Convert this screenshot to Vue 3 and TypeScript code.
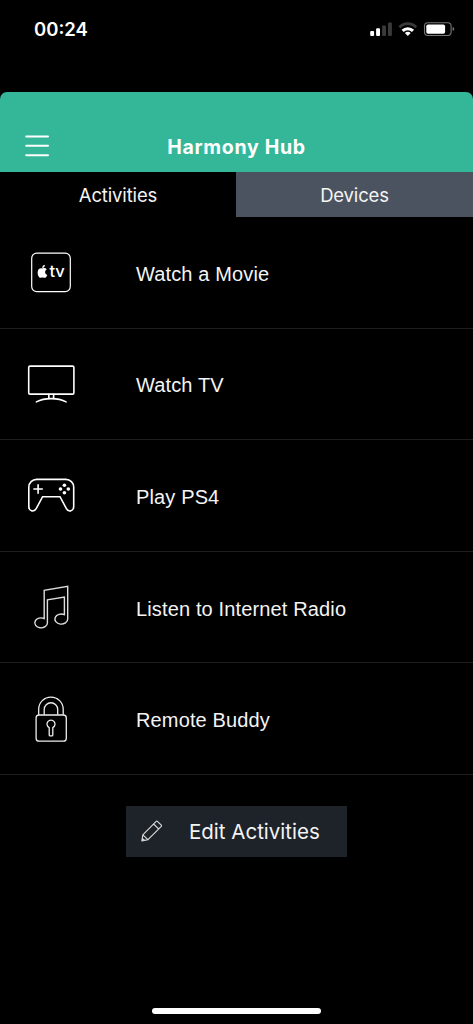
<script setup lang="ts">
import { ref } from 'vue'

type IconName = 'appletv' | 'tv' | 'gamepad' | 'music' | 'lock'

interface Activity {
  label: string
  icon: IconName
}

const activities: Activity[] = [
  { label: 'Watch a Movie', icon: 'appletv' },
  { label: 'Watch TV', icon: 'tv' },
  { label: 'Play PS4', icon: 'gamepad' },
  { label: 'Listen to Internet Radio', icon: 'music' },
  { label: 'Remote Buddy', icon: 'lock' },
]

const tabs = ['Activities', 'Devices'] as const
const activeTab = ref<(typeof tabs)[number]>('Activities')
</script>

<template>
  <div class="screen">
    <div class="status">
      <span class="time">00:24</span>
      <svg class="indicators" width="86" height="16" viewBox="369 21 86 16">
        <g fill="#fff">
          <rect x="370.2" y="31" width="3.9" height="5" rx="1" />
          <rect x="376.1" y="28.2" width="3.9" height="7.8" rx="1" />
          <rect x="382.1" y="25.4" width="3.9" height="10.6" rx="1" fill="#3a3a3a" />
          <rect x="388" y="22.5" width="3.9" height="13.5" rx="1" fill="#3a3a3a" />
        </g>
        <g fill="none" stroke-width="2.7">
          <path d="M399.4 27.3 A11.6 11.6 0 0 1 416.2 27.3" stroke="#3a3a3a" />
          <path d="M402.6 30.9 A7.2 7.2 0 0 1 413 30.9" stroke="#fff" stroke-width="3" />
        </g>
        <path d="M404.9 33 A4 4 0 0 1 410.7 33 L407.8 35.9 Z" fill="#fff" />
        <rect x="424.5" y="22.7" width="26.6" height="12.8" rx="3.4" fill="none" stroke="#777" stroke-width="1.1" />
        <rect x="426.3" y="24.5" width="18.8" height="9.2" rx="1.8" fill="#fff" />
        <path d="M452.6 27.1 Q454.3 27.5 454.3 29.1 Q454.3 30.7 452.6 31.1 Z" fill="#777" />
      </svg>
    </div>

    <header class="header">
      <button class="menu" aria-label="Menu">
        <svg width="24" height="22" viewBox="0 0 24 22" stroke="#fff" stroke-width="2" stroke-linecap="round">
          <path d="M1.2 1.4H23M1.2 10.8H23M1.2 20.2H23" />
        </svg>
      </button>
      <h1 class="title">Harmony Hub</h1>
    </header>

    <nav class="tabs">
      <button
        v-for="tab in tabs"
        :key="tab"
        class="tab"
        :class="{ active: tab === activeTab }"
        @click="activeTab = tab"
      >{{ tab }}</button>
    </nav>

    <ul class="list">
      <li v-for="item in activities" :key="item.label" class="row">
        <svg class="icon" width="60" height="60" viewBox="-30 -30 60 60">
          <g v-if="item.icon === 'appletv'">
            <rect x="-19.3" y="-18.8" width="38.6" height="38.4" rx="5" stroke-width="1.2" />
            <path class="solid" transform="translate(0 .6)" d="M-8.7 -4.1C-7.3 -4.9 -5.3 -4.7 -4.3 -3.2C-6.6 -1.7 -6.3 1.2 -3.7 2.3C-4.6 4.5 -5.7 5.5 -7 5.2C-8.2 4.7 -8.9 4.7 -10 5.2C-12.1 5.8 -13.7 1.8 -13.3 -0.8C-12.9 -3.9 -10.7 -4.9 -8.7 -4.1ZM-8.8 -4.7C-8.8 -6.3 -7.8 -7.6 -6.1 -7.9C-5.9 -6.2 -7.1 -4.8 -8.8 -4.7Z" />
            <text class="solid brand" x="-1.6" y="5.3">tv</text>
          </g>
          <g v-else-if="item.icon === 'tv'" stroke-width="1.6">
            <rect x="-22.3" y="-17.9" width="45.2" height="28" rx="1.4" />
            <path d="M-2.2 10.2V14.6M2.6 10.2V14.6M-14.6 17.9C-6.5 13.5 7 13.5 15.1 17.9" stroke-linecap="round" />
          </g>
          <g v-else-if="item.icon === 'gamepad'" stroke-width="1.6">
            <path d="M-22.2 -7.8A7.8 7.8 0 0 1 -14.4 -15.6H14.9A7.8 7.8 0 0 1 22.7 -7.8V11.4C22.7 16.9 17 17 15.4 13.7L9 1.7H-8.4L-14.8 13.7C-16.5 17 -22.2 16.9 -22.2 11.4Z" />
            <path d="M-17.1 -6H-8.7M-12.9 -10.2V-1.8" stroke-linecap="round" />
            <g class="solid">
              <circle cx="13.4" cy="-9.8" r="1.8" />
              <circle cx="13.4" cy="-2.2" r="1.8" />
              <circle cx="9.5" cy="-6" r="1.8" />
              <circle cx="17.3" cy="-6" r="1.8" />
            </g>
          </g>
          <g v-else-if="item.icon === 'music'" stroke="#ddd" stroke-width="1.4">
            <path d="M-3.6 15.9A6.3 5 0 1 1 -6.8 11.5V-16.6L16.7 -20.7V12A6.4 5.1 0 1 1 13.4 7.6V-9.9L-3.6 -7.2Z" />
          </g>
          <g v-else stroke="#eee" stroke-width="1.3">
            <rect x="-14.9" y="-4" width="30.2" height="26.2" rx="3" />
            <path d="M-12.3 -4.2V-9.7A12.2 12.2 0 0 1 12.2 -9.7V-4.2M-6.8 -4.2V-9.5A6.7 6.7 0 0 1 6.7 -9.5V-4.2" />
            <path d="M-1.8 8.7A4 4 0 1 1 1.8 8.7V16Q1.8 16.9 0.9 16.9H-0.9Q-1.8 16.9 -1.8 16Z" />
          </g>
        </svg>
        <span class="label">{{ item.label }}</span>
      </li>
    </ul>

    <button class="edit">
      <svg width="22" height="22" viewBox="0 0 22 22" fill="none" stroke="#ddd" stroke-width="1.1" stroke-linejoin="round">
        <path d="M.8 21L1.8 14.8L15.2 1.4Q15.8 .8 16.4 1.4L20.3 5.2Q20.8 5.8 20.3 6.4L7 19.6ZM1.8 14.8L7 19.6M12.6 4L17.6 8.9M1.3 18.5L3.4 20.4" />
      </svg>
      <span>Edit Activities</span>
    </button>

    <div class="home"></div>
  </div>
</template>

<style>
html,
body {
  background: #000;
}
</style>

<style scoped>
.screen {
  box-sizing: border-box;
  display: flex;
  flex-direction: column;
  width: 473px;
  height: 1024px;
  overflow: hidden;
  background: #000;
  color: #fff;
  font-family: Inter, 'Liberation Sans', sans-serif;
}

button {
  margin: 0;
  padding: 0;
  border: 0;
  background: none;
  color: inherit;
  font: inherit;
}

.status {
  display: flex;
  justify-content: space-between;
  align-items: flex-start;
  height: 92px;
  padding: 0 18px 0 34px;
  box-sizing: border-box;
}

.time {
  margin-top: 17px;
  font-size: 18.5px;
  line-height: 24px;
  font-weight: 600;
}

.indicators {
  margin-top: 21px;
}

.header {
  display: grid;
  grid-template-columns: 74px 1fr 74px;
  align-items: start;
  height: 80px;
  padding-top: 42px;
  box-sizing: border-box;
  border-radius: 7px 7px 0 0;
  background: #33b798;
}

.menu {
  display: flex;
  padding: 1px 0 0 25px;
}

.title {
  margin: 0;
  padding-top: 1px;
  text-align: center;
  font-size: 19.5px;
  line-height: 24px;
  font-weight: 700;
  letter-spacing: 0.7px;
}

.tabs {
  display: grid;
  grid-template-columns: 236px 1fr;
  height: 45px;
}

.tab {
  background: #4a535f;
  color: #f4f4f4;
  font-size: 18.5px;
  line-height: 45px;
  letter-spacing: -0.15px;
  padding-top: 1px;
  height: 45px;
}

.tab.active {
  background: #000;
}

.list {
  margin: 0;
  padding: 0;
  list-style: none;
}

.row {
  display: flex;
  align-items: center;
  height: 111.6px;
  padding-left: 21px;
  box-sizing: border-box;
  border-bottom: 1px solid #1e1e1e;
}

.icon {
  fill: none;
  stroke: #fff;
  margin-right: 55px;
}

.solid {
  fill: #fff;
  stroke: none;
}

.brand {
  font-family: Inter, sans-serif;
  font-size: 16.5px;
  font-weight: 500;
}

.label {
  color: #f4f4f4;
  font-family: 'Liberation Sans', Arial, sans-serif;
  font-size: 20px;
  letter-spacing: 0.14px;
  line-height: 24px;
  padding-top: 3px;
}

.edit {
  display: flex;
  align-items: center;
  align-self: center;
  gap: 26px;
  width: 221px;
  height: 51px;
  margin-top: 31px;
  padding-left: 15px;
  background: #1e2229;
  color: #f4f4f4;
  font-size: 20.5px;
  text-align: left;
  white-space: nowrap;
}

.home {
  align-self: center;
  width: 169px;
  height: 6.5px;
  margin: auto 0 10px;
  border-radius: 4px;
  background: #fff;
}
</style>
